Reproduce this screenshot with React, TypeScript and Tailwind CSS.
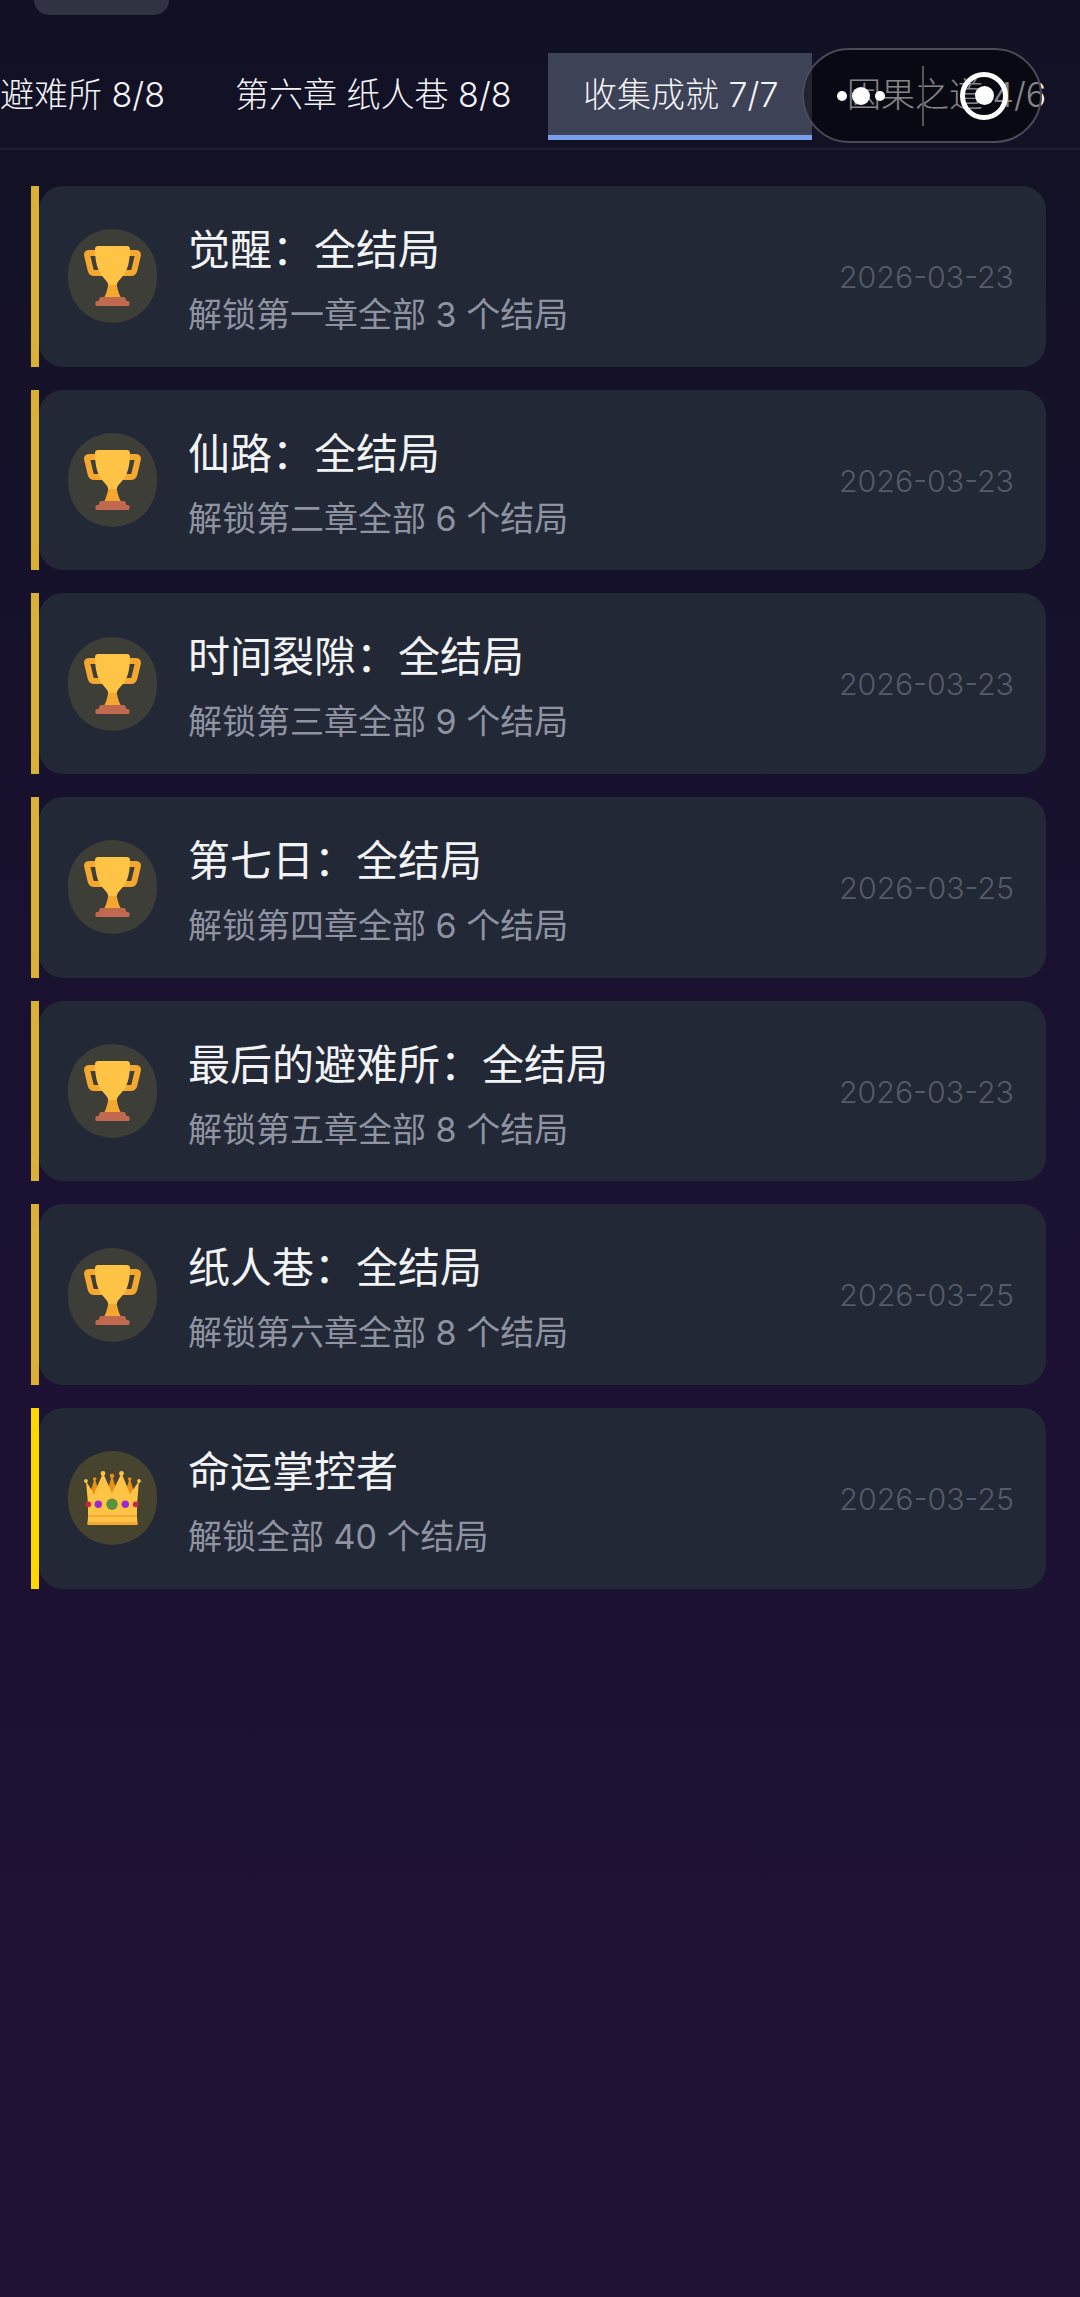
const FONT = "font-['Inter','Noto_Sans_CJK_SC','Noto_Sans',sans-serif]";

const tabs = [
  { label: '最后的避难所 8/8', width: 'w-[200px]', active: false },
  { label: '第六章 纸人巷 8/8', width: 'w-[348px]', active: false },
  { label: '收集成就 7/7', width: 'w-[264px]', active: true },
  { label: '因果之道 4/6', width: 'w-[268px]', active: false },
];

const achievements = [
  { title: '觉醒：全结局', desc: '解锁第一章全部 3 个结局', date: '2026-03-23' },
  { title: '仙路：全结局', desc: '解锁第二章全部 6 个结局', date: '2026-03-23' },
  { title: '时间裂隙：全结局', desc: '解锁第三章全部 9 个结局', date: '2026-03-23' },
  { title: '第七日：全结局', desc: '解锁第四章全部 6 个结局', date: '2026-03-25' },
  { title: '最后的避难所：全结局', desc: '解锁第五章全部 8 个结局', date: '2026-03-23' },
  { title: '纸人巷：全结局', desc: '解锁第六章全部 8 个结局', date: '2026-03-25' },
  { title: '命运掌控者', desc: '解锁全部 40 个结局', date: '2026-03-25', crown: true },
];

function Trophy() {
  return (
    <svg viewBox="0 0 57 60" className="w-[57px] h-[60px]">
      <path d="M13 7H5Q2.600 7 3.200 9.500L6.600 24Q7.300 27 10.500 27H18" fill="none" stroke="#f4a830" strokeWidth="6" />
      <path d="M44 7H52Q54.400 7 53.800 9.500L50.400 24Q49.700 27 46.500 27H39" fill="none" stroke="#f4a830" strokeWidth="6" />
      <path d="M24.500 36h8c.4 5 1.800 11 4.500 16H20c2.700-5 4.100-11 4.500-16z" fill="#f4a830" />
      <path d="M14 0h29c1.700 0 3 1.300 3 3 0 10-1.500 19-6 25.500-3 4.300-6 6-7.500 10.500h-8C23 34.500 20 32.800 17 28.500 12.500 22 11 13 11 3c0-1.700 1.300-3 3-3z" fill="#ffc445" />
      <path d="M17 51h23c.6 0 1 .3 1.200.8l1.300 3.200H14.500l1.300-3.200c.2-.5.600-.8 1.200-.8z" fill="#c1694f" />
      <rect x="11.500" y="55" width="34" height="5" rx="1.500" fill="#c1694f" />
    </svg>
  );
}

function Crown() {
  return (
    <svg viewBox="0 0 57 54" className="w-[57px] h-[54px]">
      <path d="M10.700 7 6 22h9.500z" fill="#e88f1a" />
      <path d="M45.700 7 41 22h9.500z" fill="#e88f1a" />
      <path d="M28 4 22 24h12z" fill="#e88f1a" />
      <path d="M2 10l8 13 9-21 9 20 9.500-20L46 23l9-13-2 23v13l.5 7h-50l.5-7V33z" fill="#ffc445" />
      <rect x="4" y="44" width="49" height="2" fill="#f4a830" />
      <rect x="3.500" y="51" width="50" height="3" fill="#f4a830" />
      <circle cx="1.900" cy="10" r="1.900" fill="#ffc445" />
      <circle cx="19" cy="2.400" r="2.400" fill="#ffc445" />
      <circle cx="37.500" cy="2.400" r="2.400" fill="#ffc445" />
      <circle cx="55" cy="10" r="1.900" fill="#ffc445" />
      <circle cx="28" cy="5" r="2.300" fill="#e88f1a" />
      <circle cx="10.700" cy="8" r="1.800" fill="#e88f1a" />
      <circle cx="45.700" cy="8" r="1.800" fill="#e88f1a" />
      <circle cx="4.300" cy="33.300" r="2.900" fill="#c9283c" />
      <circle cx="51.700" cy="33.300" r="2.900" fill="#c9283c" />
      <circle cx="14.300" cy="33.300" r="3.700" fill="#9a2ad0" />
      <circle cx="41.300" cy="33.300" r="3.700" fill="#9a2ad0" />
      <circle cx="28" cy="33.300" r="5.700" fill="#5c913b" />
    </svg>
  );
}

function AchievementCard({ title, desc, date, crown }: { title: string; desc: string; date: string; crown?: boolean }) {
  return (
    <div className="flex h-[180.7px]">
      <div className={`w-2 shrink-0 ${crown ? 'bg-[#ffd700]' : 'bg-[#dab035]'}`} />
      <div className="flex-1 flex items-center rounded-[24px] bg-[#222836] pl-[29px] pr-[32px]">
        <div className={`w-[89px] h-[94px] rounded-full shrink-0 flex items-center justify-center ${crown ? 'bg-[#46432f]' : 'bg-[#3e3e38]'}`}>
          {crown ? <Crown /> : <Trophy />}
        </div>
        <div className="flex-1 ml-[31px] mt-[6px]">
          <div className="text-[42px] leading-[58px] text-[#f2f3f5] whitespace-nowrap">{title}</div>
          <div className="text-[34px] leading-[46px] mt-[13px] text-[#8f93a1] whitespace-nowrap">{desc}</div>
        </div>
        <div className="text-[30.400px] mt-[3px] font-light text-[#565a69] shrink-0">{date}</div>
      </div>
    </div>
  );
}

export default function App() {
  return (
    <div className={`relative min-h-[2297px] bg-gradient-to-b from-[#111124] via-[#1b1132] to-[#201235] ${FONT}`}>
      {/* what is left of the header after scrolling */}
      <div className="flex items-start h-[53px] overflow-hidden">
        <div className="ml-[34px] w-[135px] h-[15px] rounded-b-[18px] bg-[#2f3342]" />
        <div className="ml-[27px] mt-[-38px] text-[34px] leading-[40px] text-[#f2f3f5]">40/40</div>
      </div>

      {/* tabs */}
      <div className="flex h-[87px] overflow-hidden">
        {tabs.map((tab, i) => (
          <div
            key={tab.label}
            className={`shrink-0 flex items-center whitespace-nowrap text-[34px] font-light text-[#f2f3f5] border-b-[5px] ${tab.width} ${
              tab.active ? 'bg-[#3d4256] border-[#7b9ff0]' : 'border-transparent'
            } ${i === 0 ? 'justify-end pr-[35px] overflow-hidden' : 'pl-[35px]'}`}
          >
            {tab.label}
          </div>
        ))}
      </div>
      <div className="mt-[8px] h-[2px] bg-[#1f1f2e]" />

      {/* capsule */}
      <div className="absolute left-[802px] top-[48px] w-[240px] h-[95px] rounded-full border-2 border-[#4b4b55] bg-black/45 flex items-center">
        <div className="w-[114px] flex items-center justify-center gap-[5px]">
          <div className="w-[10px] h-[10px] rounded-full bg-white" />
          <div className="w-[18px] h-[18px] rounded-full bg-white" />
          <div className="w-[10px] h-[10px] rounded-full bg-white" />
        </div>
        <div className="ml-[4px] w-[2px] h-[60px] bg-[#555]" />
        <div className="ml-[36px] w-[48px] h-[48px] rounded-full border-[5px] border-white flex items-center justify-center">
          <div className="w-[19px] h-[19px] rounded-full bg-white" />
        </div>
      </div>

      {/* list */}
      <div className="pt-[36px] pl-[31px] pr-[34px] flex flex-col gap-[23px]">
        {achievements.map((a) => (
          <AchievementCard key={a.title} {...a} />
        ))}
      </div>
    </div>
  );
}
